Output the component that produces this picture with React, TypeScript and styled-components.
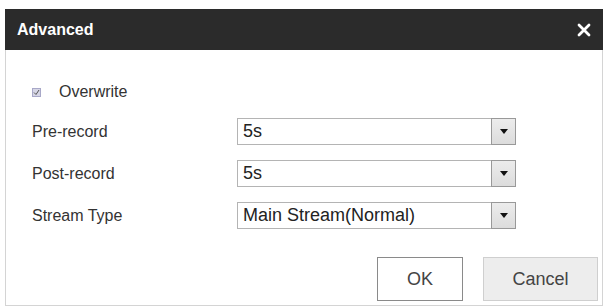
import { createGlobalStyle, styled } from 'styled-components'

const GlobalStyle = createGlobalStyle`
  html, body {
    margin: 0;
    padding: 0;
    background: #ffffff;
  }
  body {
    font-family: 'Liberation Sans', Arial, sans-serif;
  }
`

const Page = styled.div`
  padding: 9px 0 0 5px;
  width: 606px;
  height: 307px;
  box-sizing: border-box;
`

const Dialog = styled.div`
  width: 598px;
  height: 297px;
  box-sizing: border-box;
  border: 1px solid #d4d4d4;
  border-top: none;
  background: #fff;
  display: flex;
  flex-direction: column;
`

const Header = styled.div`
  height: 41px;
  margin: 0 -1px;
  background: #2b2b2b;
  display: flex;
  align-items: center;
  justify-content: space-between;
  padding: 0 12px 0 12px;
`

const Title = styled.span`
  color: #fff;
  font-weight: 700;
  font-size: 16px;
`

const Close = styled.svg`
  width: 14px;
  height: 14px;
  display: block;
`

const Body = styled.div`
  flex: 1;
  display: flex;
  flex-direction: column;
  padding: 32px 4px 4px 26px;
`

const CheckRow = styled.label`
  height: 20px;
  display: flex;
  align-items: center;
  gap: 18px;
  font-size: 16px;
  color: #333;
  margin-bottom: 16px;
`

const CheckBox = styled.span`
  width: 9px;
  height: 9px;
  box-sizing: border-box;
  border: 1px solid #a8a8c8;
  background: #d6d6e6;
  display: flex;
  align-items: center;
  justify-content: center;
`

const Form = styled.div`
  display: flex;
  flex-direction: column;
  gap: 15px;
`

const Row = styled.div`
  display: grid;
  grid-template-columns: 205px 279px;
  align-items: center;
  height: 27px;
`

const Label = styled.span`
  font-size: 16px;
  color: #333;
`

const Select = styled.div`
  height: 27px;
  box-sizing: border-box;
  border: 1px solid #b4b4b4;
  display: flex;
  align-items: center;
  justify-content: space-between;
  padding-left: 5px;
  font-size: 18px;
  color: #222;
`

const Arrow = styled.span`
  width: 25px;
  height: 27px;
  margin-right: -1px;
  box-sizing: border-box;
  border: 1px solid #999;
  background: linear-gradient(#ececec, #dcdcdc);
  display: flex;
  align-items: center;
  justify-content: center;
  &::after {
    content: '';
    border-left: 4px solid transparent;
    border-right: 4px solid transparent;
    border-top: 5px solid #111;
  }
`

const Actions = styled.div`
  margin-top: 28px;
  display: flex;
  justify-content: flex-end;
  gap: 20px;
`

const Button = styled.button<{ $primary?: boolean }>`
  height: 44px;
  width: ${(p) => (p.$primary ? '86px' : '115px')};
  box-sizing: border-box;
  border: 1px solid ${(p) => (p.$primary ? '#8a8a8a' : '#cfcfcf')};
  background: ${(p) => (p.$primary ? '#fff' : '#ededed')};
  font-family: 'Liberation Sans', Arial, sans-serif;
  font-size: 18px;
  color: #444;
  padding: 0;
`

const fields = [
  { label: 'Pre-record', value: '5s' },
  { label: 'Post-record', value: '5s' },
  { label: 'Stream Type', value: 'Main Stream(Normal)' },
]

export default function App() {
  return (
    <>
      <GlobalStyle />
      <Page>
        <Dialog>
          <Header>
            <Title>Advanced</Title>
            <Close viewBox="0 0 14 14">
              <path d="M2 2 L12 12 M12 2 L2 12" stroke="#fff" strokeWidth="2.8" strokeLinecap="round" />
            </Close>
          </Header>
          <Body>
            <CheckRow>
              <CheckBox>
                <svg width="7" height="7" viewBox="0 0 7 7">
                  <path d="M1 3.5 L3 5.5 L6 1" stroke="#555" strokeWidth="1" fill="none" />
                </svg>
              </CheckBox>
              Overwrite
            </CheckRow>
            <Form>
              {fields.map((f) => (
                <Row key={f.label}>
                  <Label>{f.label}</Label>
                  <Select>
                    {f.value}
                    <Arrow />
                  </Select>
                </Row>
              ))}
            </Form>
            <Actions>
              <Button $primary>OK</Button>
              <Button>Cancel</Button>
            </Actions>
          </Body>
        </Dialog>
      </Page>
    </>
  )
}
